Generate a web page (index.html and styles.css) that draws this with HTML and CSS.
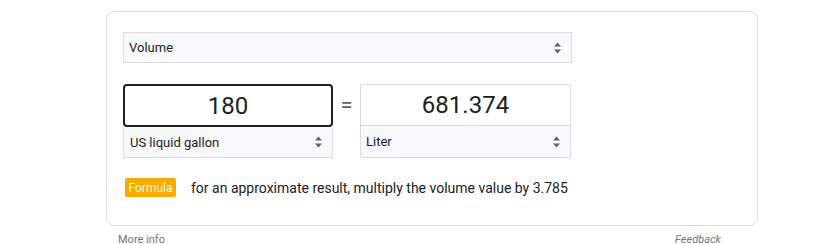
FILE: index.html
```html
<!DOCTYPE html>
<html>
<head>
<meta charset="utf-8">
<link rel="stylesheet" href="styles.css">
</head>
<body>
<div class="wrap">
  <div class="card">
    <div class="select wide">
      <span>Volume</span>
      <svg class="arrows" width="7" height="12" viewBox="0 0 7 12"><path d="M0 4.5 L3.5 0.5 L7 4.5 Z M0 7.5 L3.5 11.5 L7 7.5 Z" fill="#5f6368"/></svg>
    </div>
    <div class="conv">
      <div class="field active">
        <div class="value">180</div>
        <div class="select">
          <span>US liquid gallon</span>
          <svg class="arrows" width="7" height="12" viewBox="0 0 7 12"><path d="M0 4.5 L3.5 0.5 L7 4.5 Z M0 7.5 L3.5 11.5 L7 7.5 Z" fill="#5f6368"/></svg>
        </div>
      </div>
      <div class="eq">=</div>
      <div class="field">
        <div class="value">681.374</div>
        <div class="select">
          <span>Liter</span>
          <svg class="arrows" width="7" height="12" viewBox="0 0 7 12"><path d="M0 4.5 L3.5 0.5 L7 4.5 Z M0 7.5 L3.5 11.5 L7 7.5 Z" fill="#5f6368"/></svg>
        </div>
      </div>
    </div>
    <div class="formula">
      <span class="badge">Formula</span>
      <span class="ftext">for an approximate result, multiply the volume value by 3.785</span>
    </div>
  </div>
  <div class="foot">
    <span class="more">More info</span>
    <span class="fb">Feedback</span>
  </div>
</div>
</body>
</html>
```
FILE: styles.css
```css
* { box-sizing: border-box; }
html, body { margin: 0; padding: 0; background: #fff; }
body {
  font-family: Roboto, "Liberation Sans", Arial, sans-serif;
  color: #202124;
}
.wrap {
  width: 652px;
  margin: 11px 0 0 106px;
}
.card {
  border: 1px solid #dadce0;
  border-radius: 8px;
  padding: 20px 16px 28px 16px;
  height: 215px;
}
.select {
  display: flex;
  align-items: center;
  justify-content: space-between;
  height: 31px;
  background: #f8f9fa;
  border: 1px solid #dadce0;
  padding: 0 10px 0 5px;
  font-size: 13px;
  color: #202124;
}
.select.wide { width: 449px; }
.arrows { display: block; }
.conv {
  display: flex;
  margin-top: 21px;
  height: 74px;
}
.field {
  display: flex;
  flex-direction: column;
  width: 211px;
  border: 1px solid #dadce0;
  border-radius: 2px;
}
.field .value {
  height: 42px;
  display: flex;
  align-items: center;
  justify-content: center;
  font-size: 24px;
  background: #fff;
  border-bottom: 1px solid #dadce0;
}
.field .select {
  border: none;
  height: 31px;
  padding-left: 5px;
}
.field.active {
  width: 210px;
  border: none;
}
.field.active .value {
  height: 43px;
  border: 2px solid #202124;
  border-radius: 4px;
}
.field.active .select {
  border: 1px solid #dadce0;
  border-top: none;
  height: 31px;
  padding-left: 6px;
}
.eq {
  width: 27px;
  display: flex;
  align-items: center;
  justify-content: center;
  height: 43px;
  font-size: 22px;
  color: #5f6368;
  padding-bottom: 2px;
}
.formula {
  display: flex;
  align-items: center;
  margin-top: 20px;
  padding-left: 2px;
}
.badge {
  display: inline-flex;
  align-items: center;
  justify-content: center;
  width: 51px;
  height: 19px;
  background: #f9ab00;
  color: #fff8e1;
  font-size: 12px;
  border-radius: 2px;
}
.ftext {
  margin-left: 15px;
  font-size: 14px;
  color: #202124;
}
.foot {
  display: flex;
  justify-content: space-between;
  margin-top: 6px;
  padding: 0 37px 0 12px;
  font-size: 11px;
  line-height: 16px;
  color: #70757a;
}
.fb { font-style: italic; }
```
